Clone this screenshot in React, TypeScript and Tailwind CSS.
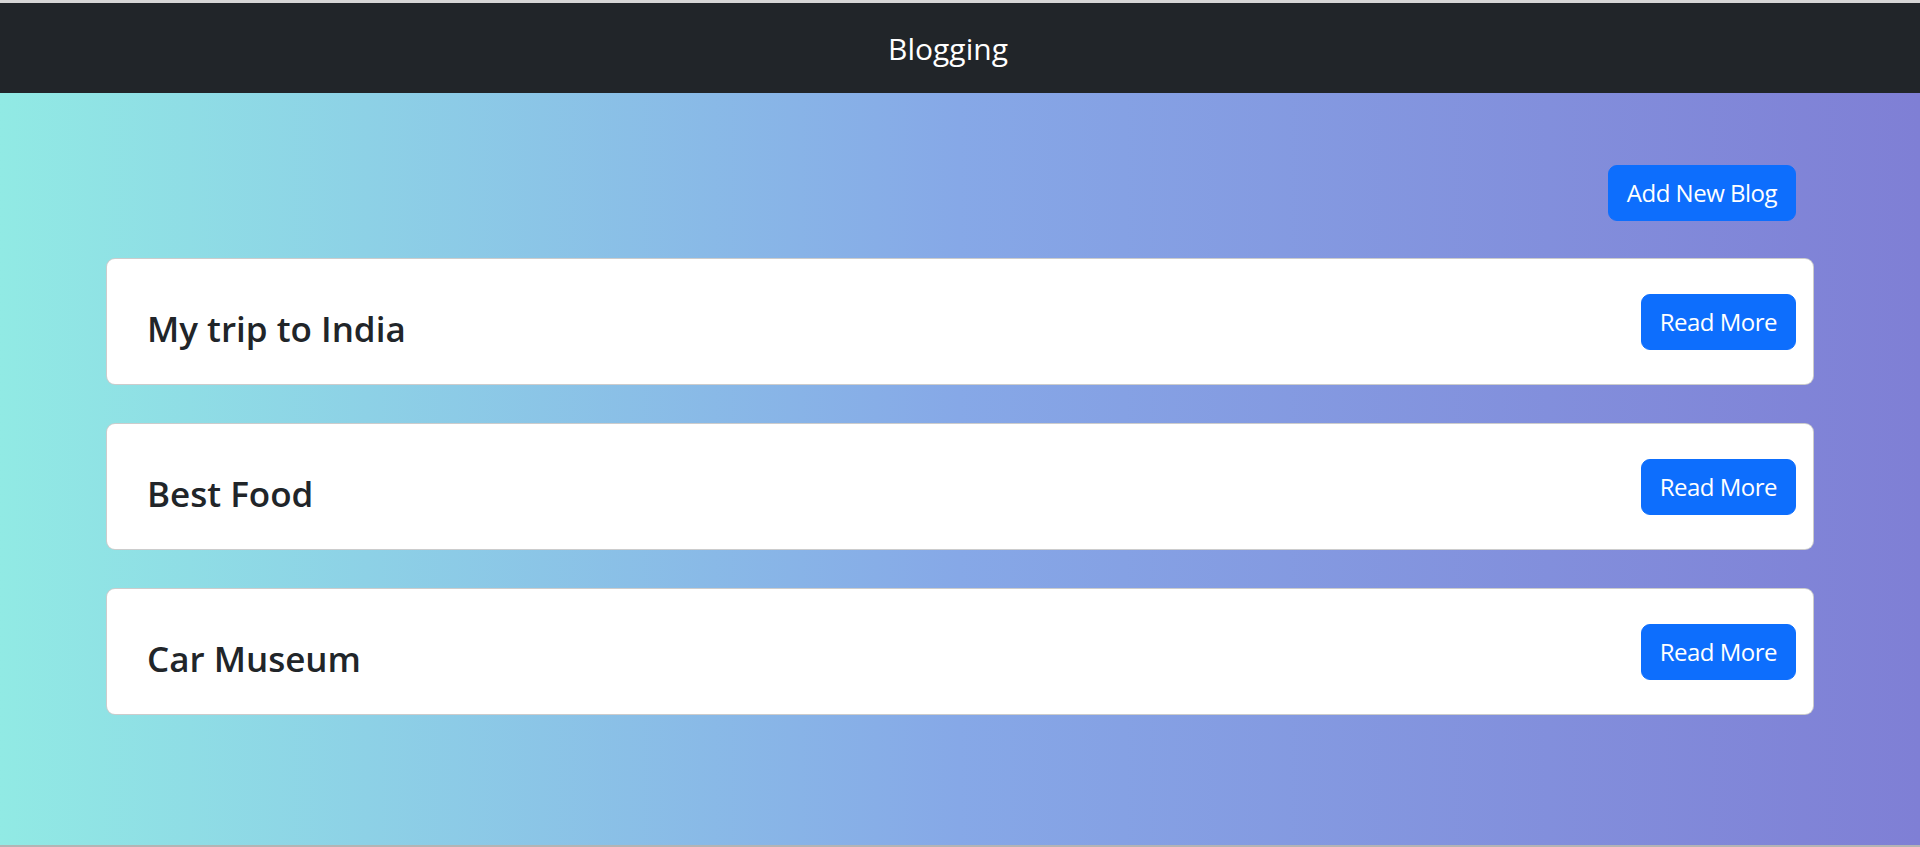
import React from "react"

const blogs = [
  { id: 1, title: "My trip to India" },
  { id: 2, title: "Best Food" },
  { id: 3, title: "Car Museum" },
]

export default function App() {
  return (
    <div className="min-h-[847px] flex flex-col font-['Open_Sans',sans-serif] border-t-[3px] border-[#d6d6d6] border-b-2 border-b-[#b4b4b4]">
      {/* Navbar */}
      <nav className="h-[90px] bg-[#212529] flex items-center justify-center pr-[24px]">
        <span className="text-white text-[30px] leading-[45px]">Blogging</span>
      </nav>

      {/* Blog list */}
      <main className="flex-1 bg-gradient-to-r from-[#91eae4] via-[#86a8e7] to-[#7f7fd5] px-[106px] pt-[72px] pb-[60px]">
        <div className="flex justify-end pr-[18px] mb-[37px]">
          <button className="bg-[#0d6efd] text-white text-[24px] leading-[36px] tracking-[-0.5px] px-[18px] py-[9px] border border-[#0d6efd] rounded-[9px]">
            Add New Blog
          </button>
        </div>

        <div className="flex flex-col gap-[38px]">
          {blogs.map((blog) => (
            <div
              key={blog.id}
              className="h-[127px] bg-white border border-black/20 rounded-[9px] flex items-start justify-between pl-[40px] pr-[17px]"
            >
              <h4 className="mt-[49px] text-[35px] leading-[1.2] font-semibold text-[#212529]">{blog.title}</h4>
              <button className="mt-[35px] bg-[#0d6efd] text-white text-[24px] leading-[36px] tracking-[-0.5px] px-[18px] py-[9px] border border-[#0d6efd] rounded-[9px]">
                Read More
              </button>
            </div>
          ))}
        </div>
      </main>
    </div>
  )
}
